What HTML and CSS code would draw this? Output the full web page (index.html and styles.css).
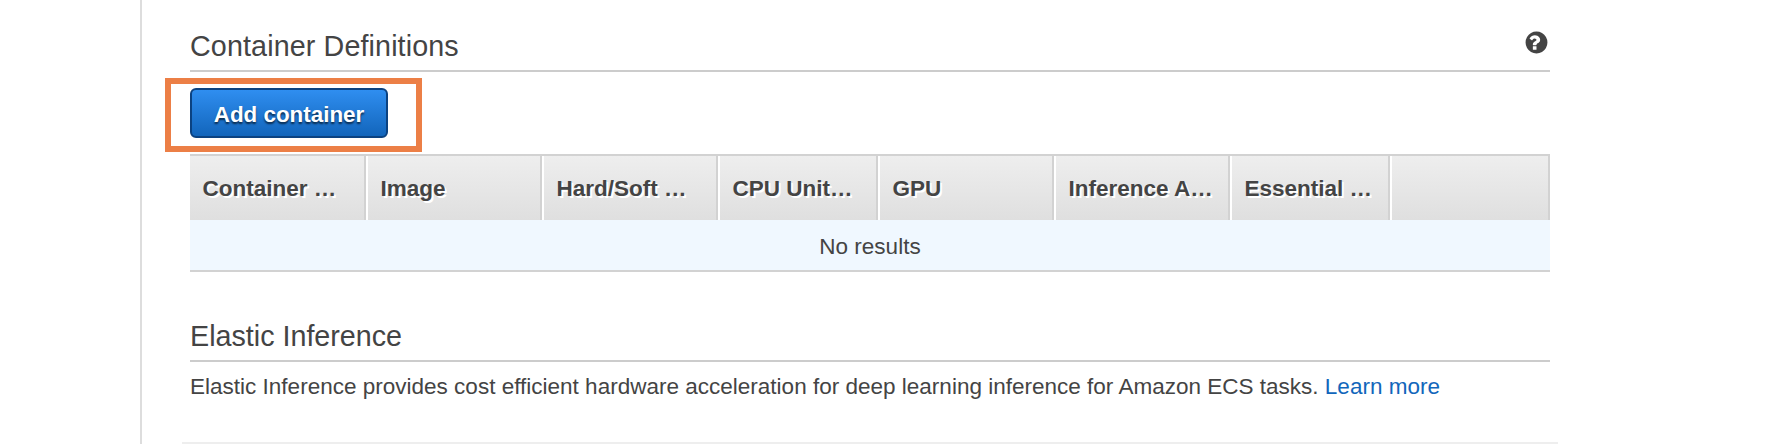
FILE: index.html
```html
<!DOCTYPE html>
<html lang="en">
<head>
<meta charset="utf-8">
<title>Container Definitions</title>
<link rel="stylesheet" href="styles.css">
</head>
<body>
<main class="panel">
  <section class="section">
    <header class="section-head">
      <h2 class="title title-containers">Container Definitions</h2>
      <svg class="help" viewBox="88 88 1616 1616" role="img" aria-label="Help"><path d="M896 1376v-192q0-14-9-23t-23-9h-192q-14 0-23 9t-9 23v192q0 14 9 23t23 9h192q14 0 23-9t9-23zm256-672q0-88-55.500-163t-138.500-116-170-41q-243 0-371 213-15 24 8 42l132 100q7 6 19 6 16 0 25-12 53-68 86-92 34-24 86-24 48 0 85.500 26t37.500 59q0 38-20 61t-68 45q-63 28-115.500 86.500t-52.500 125.500v36q0 14 9 23t23 9h192q14 0 23-9t9-23q0-19 21.500-49.500t54.500-49.500q32-18 49-28.500t46-35 44.500-48 28-60.500 12.500-81zm512 192q0 209-103 385.500t-279.500 279.500-385.500 103-385.500-103-279.500-279.500-103-385.500 103-385.500 279.500-279.500 385.500-103 385.500 103 279.500 279.500 103 385.500z"/></svg>
    </header>
    <div class="highlight"><button class="add-button" type="button"><span class="add-label">Add container</span></button></div>
    <div class="table">
      <div class="table-head">
        <div class="col"><span>Container …</span></div>
        <div class="col"><span>Image</span></div>
        <div class="col"><span>Hard/Soft …</span></div>
        <div class="col"><span>CPU Unit…</span></div>
        <div class="col"><span>GPU</span></div>
        <div class="col"><span>Inference A…</span></div>
        <div class="col"><span>Essential …</span></div>
        <div class="col"></div>
      </div>
      <div class="table-empty"><span>No results</span></div>
    </div>
  </section>
  <section class="section section-inference">
    <header class="section-head">
      <h2 class="title title-inference">Elastic Inference</h2>
    </header>
    <p class="copy">Elastic Inference provides cost efficient hardware acceleration for deep learning inference for Amazon ECS tasks. <a class="link" href="#">Learn more</a></p>
  </section>
  <hr class="divider">
</main>
</body>
</html>
```
FILE: styles.css
```css
* {
  box-sizing: border-box;
}

body {
  margin: 0;
  background: #fff;
  color: #444;
  font: 22.5px/30px "Liberation Sans", Arial, Helvetica, sans-serif;
}

.panel {
  height: 444px;
  margin-left: 140px;
  padding: 0 220px 0 48px;
  border-left: 2px solid #ddd;
  overflow: hidden;
}

.section-head {
  display: flex;
  justify-content: space-between;
  height: 72px;
  padding-top: 30px;
  border-bottom: 2px solid #ccc;
}

.title {
  margin: 0;
  font-size: 28.7px;
  font-weight: 400;
  line-height: 32px;
  white-space: nowrap;
}

.title-containers {
  letter-spacing: 0.12px;
}

.help {
  width: 23px;
  height: 23px;
  margin: 1px 2px 0 0;
  fill: #444;
}

.highlight {
  width: 257px;
  height: 74px;
  margin: 6px 0 2px -25px;
  padding: 4px 0 0 19px;
  border: 6px solid #ec7f46;
}

.add-button {
  display: block;
  width: 198px;
  height: 50px;
  padding: 3px 0 0;
  border: 2px solid #0b4281;
  border-radius: 6px;
  background: linear-gradient(#2f8ef0, #1265bb);
  color: #fff;
  font: bold 22.4px/43px "Liberation Sans", Arial, Helvetica, sans-serif;
  text-shadow: 0 2px 2px rgba(0, 0, 0, 0.65);
}

.add-label {
  display: block;
  padding-top: 1px;
  line-height: 42px;
}

.table {
  border-top: 2px solid #d2d2d2;
  border-bottom: 2px solid #d2d2d2;
}

.table-head {
  display: grid;
  grid-template-columns: 176fr 176fr 176fr 160fr 176fr 176fr 160fr 160fr;
  height: 64px;
}

.col {
  padding: 2px 0 0 12.5px;
  border-left: 2px solid #fff;
  border-right: 2px solid #d2d2d2;
  background: linear-gradient(#eee, #dfdfdf);
  font-weight: 700;
  line-height: 62px;
  text-shadow: 2px 2px 0 #fff;
  white-space: nowrap;
}

.col:first-child {
  border-left: 0;
}

.table-empty {
  height: 50px;
  background: #f0f8ff;
  line-height: 54px;
  text-align: center;
}

.section-inference {
  padding-top: 18px;
}

.copy {
  margin: 10px 0 0;
  letter-spacing: 0.008px;
  white-space: nowrap;
}

.link {
  color: #1166bb;
  text-decoration: none;
}

.divider {
  height: 2px;
  margin: 40px -8px 0;
  border: 0;
  background: #eee;
}
```
